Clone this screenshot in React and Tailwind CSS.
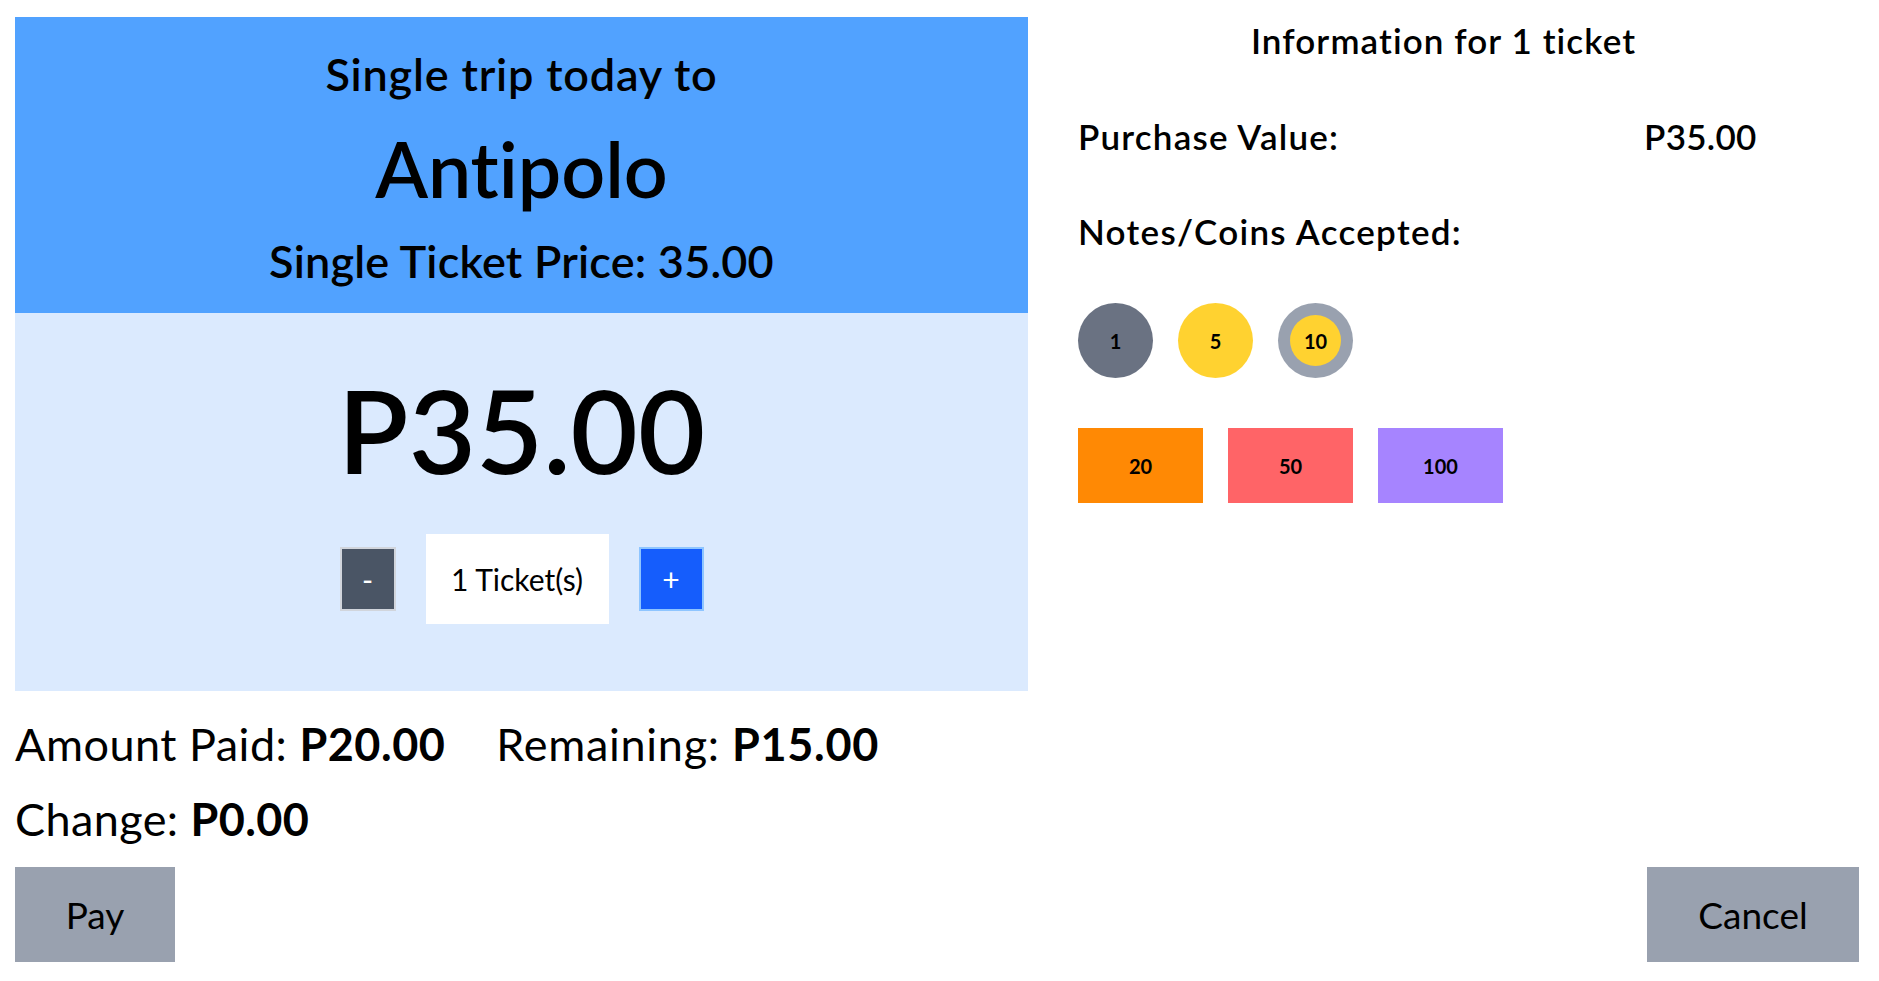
export default function App() {
    const coins = [
        { value: "1", className: "bg-gray-500" },
        { value: "5", className: "bg-amber-300" },
    ];
    const notes = [
        { value: "20", className: "bg-orange-400" },
        { value: "50", className: "bg-red-400" },
        { value: "100", className: "bg-violet-400" },
    ];

    return (
        <div className="w-full h-[981px] bg-white text-black font-['Lato',sans-serif] [font-variant-ligatures:none] pl-[15px] pr-[20px] pt-[17px] flex flex-col">
            <div className="flex">
                {/* left: trip + ticket counter + totals */}
                <div className="w-[1013px] flex flex-col">
                    <div className="h-[296px] bg-blue-400 flex flex-col items-center pt-[35px]">
                        <div className="text-[45px] leading-[45px] font-semibold tracking-[0.8px]">
                            Single trip today to
                        </div>
                        <div className="text-[77px] leading-[77px] font-semibold mt-[33px]">Antipolo</div>
                        <div className="text-[45px] leading-[45px] font-semibold tracking-[0.2px] mt-[32px]">
                            Single Ticket Price: 35.00
                        </div>
                    </div>

                    <div className="h-[378px] bg-blue-100 flex flex-col items-center pt-[59px]">
                        <div className="text-[116px] leading-[116px] font-semibold">P35.00</div>
                        <div className="flex items-center gap-[30px] mt-[46px]">
                            <button className="w-[56px] h-[64px] bg-gray-600 border-2 border-gray-300 text-white text-[30px] leading-none">
                                -
                            </button>
                            <div className="w-[183px] h-[90px] bg-white flex items-center justify-center text-[30px]">
                                1 Ticket(s)
                            </div>
                            <button className="w-[65px] h-[64px] bg-blue-600 border-2 border-blue-300 text-white text-[30px] leading-none">
                                +
                            </button>
                        </div>
                    </div>

                    <div className="flex gap-[51px] text-[45px] leading-[45px] mt-[31px]">
                        <span className="tracking-[0.5px]">
                            Amount Paid: <b className="font-bold">P20.00</b>
                        </span>
                        <span className="tracking-[0.7px]">
                            Remaining: <b className="font-bold">P15.00</b>
                        </span>
                    </div>
                    <div className="text-[45px] leading-[45px] tracking-[0.4px] mt-[30px]">
                        Change: <b className="font-bold">P0.00</b>
                    </div>
                </div>

                {/* right: ticket info + accepted money */}
                <div className="w-[831px] px-[50px] flex flex-col">
                    <div className="text-[35px] leading-[35px] font-semibold tracking-[1.1px] text-center mt-[6px]">
                        Information for 1 ticket
                    </div>
                    <div className="flex text-[35px] leading-[35px] font-semibold mt-[61px]">
                        <span className="w-[566px] tracking-[1.2px]">Purchase Value:</span>
                        <span className="tracking-[0.3px]">P35.00</span>
                    </div>
                    <div className="text-[35px] leading-[35px] font-semibold tracking-[1.3px] mt-[60px]">
                        Notes/Coins Accepted:
                    </div>

                    <div className="flex gap-[25px] mt-[54px]">
                        {coins.map((c) => (
                            <div
                                key={c.value}
                                className={`w-[75px] h-[75px] rounded-full flex items-center justify-center text-[20px] font-bold ${c.className}`}
                            >
                                {c.value}
                            </div>
                        ))}
                        <div className="w-[75px] h-[75px] rounded-full bg-gray-400 flex items-center justify-center">
                            <div className="w-[51px] h-[51px] rounded-full bg-amber-300 flex items-center justify-center text-[20px] font-bold">
                                10
                            </div>
                        </div>
                    </div>

                    <div className="flex gap-[25px] mt-[50px]">
                        {notes.map((n) => (
                            <div
                                key={n.value}
                                className={`w-[125px] h-[75px] flex items-center justify-center text-[20px] font-bold ${n.className}`}
                            >
                                {n.value}
                            </div>
                        ))}
                    </div>
                </div>
            </div>

            {/* actions */}
            <div className="flex justify-between mt-[25px]">
                <button className="w-[160px] h-[95px] bg-gray-400 text-[37px] leading-none">Pay</button>
                <button className="w-[212px] h-[95px] bg-gray-400 text-[37px] leading-none">Cancel</button>
            </div>
        </div>
    );
}
